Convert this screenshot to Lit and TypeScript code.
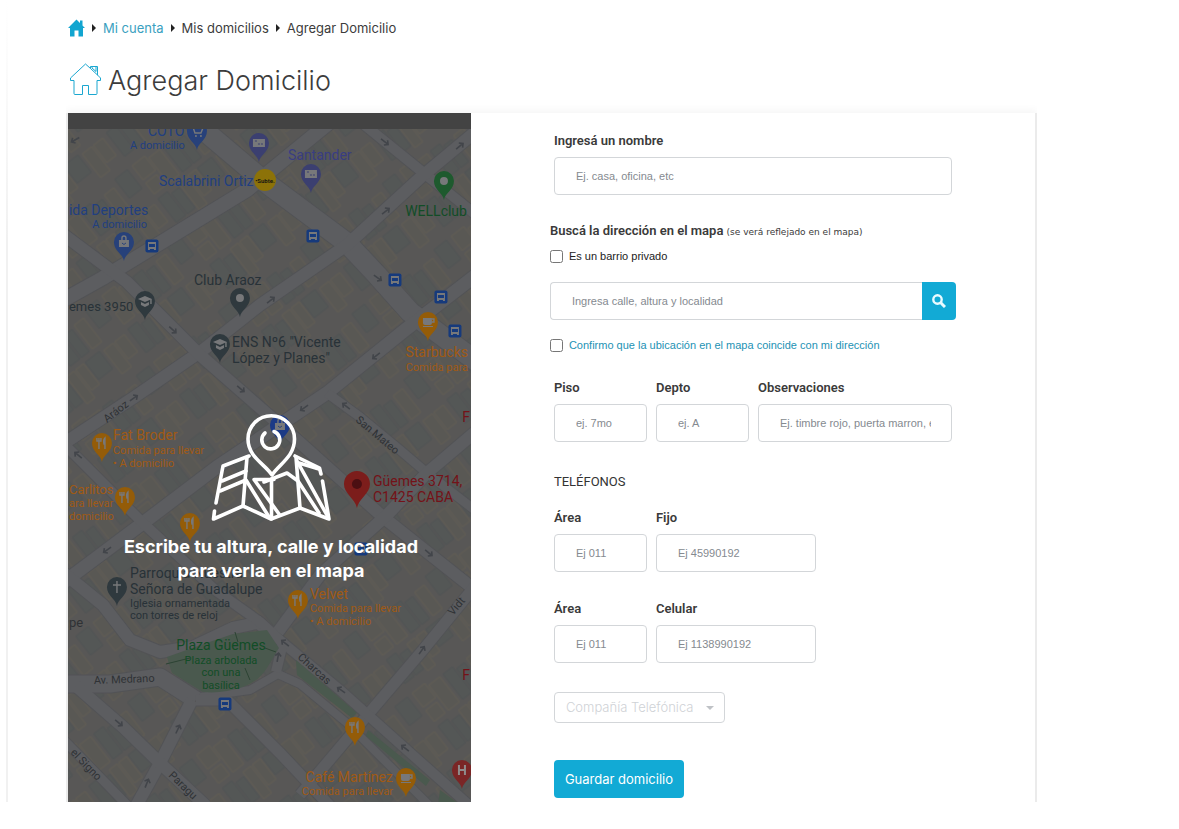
import { LitElement, html, svg, css } from "lit";
import { customElement, state } from "lit/decorators.js";

type Glyph = "cart" | "card" | "dot" | "bag" | "cap" | "cup" | "fork" | "cross" | "hospital";

interface Street { d: string; w: number }
interface Pin { x: number; y: number; fill: string; glyph: Glyph }
interface Label { x: number; y: number; text: string; fill: string; size: number; rotate?: number; anchor?: string }

const BLUE = "#213f80";
const VIOLET = "#393d82";
const SLATE = "#283238";
const ORANGE = "#a05a14";
const AMBER = "#945c08";
const GREEN = "#124d27";
const RED = "#741218";
const GREY = "#2f3235";

const STREETS: Street[] = [
  { d: "M60 302L103 278L247 190L330 122", w: 14 },
  { d: "M180 110L265 182L347 243L377 275L410 312L480 364", w: 20 },
  { d: "M356 118L420 170L480 218", w: 10 },
  { d: "M480 128L420 178L347 245L260 305L203 350L133 398L60 446", w: 12 },
  { d: "M60 232L127 282L200 355L297 440L383 517L480 594", w: 12 },
  { d: "M480 272L405 330L327 393L217 467L143 523L60 585", w: 13 },
  { d: "M327 393L360 417L400 450L427 473L480 514", w: 9 },
  { d: "M480 428L427 473L387 515L320 575L278 632", w: 12 },
  { d: "M480 580L423 650L365 718L300 795", w: 11 },
  { d: "M250 618L283 643L340 690L407 750L470 806", w: 10 },
  { d: "M200 697L250 690L278 674L300 684L347 723L430 806", w: 8 },
  { d: "M60 684L110 684L160 677L196 700", w: 17 },
  { d: "M192 700L160 763L134 810", w: 12 },
  { d: "M76 686L123 727L160 763L206 806", w: 12 },
  { d: "M60 736L128 806", w: 9 },
  { d: "M60 570L103 605L130 640L160 652L193 647L233 628L262 622", w: 12 },
  { d: "M196 700L227 700L280 753L330 806", w: 11 },
  { d: "M60 440L143 523L215 590L260 622L283 643L276 672", w: 10 },
];

const ARROWS: [number, number, number][] = [
  [75, 140, 150], [385, 142, 38], [460, 146, -40], [386, 211, -38], [378, 278, 35],
  [173, 330, 42], [271, 300, -38], [376, 356, 142], [241, 389, 40], [134, 398, -35],
  [304, 408, 145], [346, 406, 218], [78, 455, 220], [107, 550, 145], [429, 553, 40],
  [285, 643, 218], [278, 657, -80], [422, 650, -55], [341, 690, 215], [405, 748, 218],
  [119, 723, 40], [178, 729, -65], [147, 783, -68],
];

const PINS: Pin[] = [
  { x: 197, y: 131, fill: "#27417a", glyph: "cart" },
  { x: 259, y: 143, fill: "#3b3f70", glyph: "card" },
  { x: 311, y: 174, fill: "#3b3f70", glyph: "card" },
  { x: 444, y: 181, fill: "#1e5a2e", glyph: "dot" },
  { x: 124, y: 242, fill: "#27417a", glyph: "bag" },
  { x: 145, y: 301, fill: "#2f393e", glyph: "cap" },
  { x: 240, y: 298, fill: "#2f393e", glyph: "dot" },
  { x: 220, y: 344, fill: "#2f393e", glyph: "cap" },
  { x: 428, y: 322, fill: AMBER, glyph: "cup" },
  { x: 280, y: 425, fill: "#1c3a86", glyph: "bag" },
  { x: 102, y: 443, fill: AMBER, glyph: "fork" },
  { x: 125, y: 497, fill: AMBER, glyph: "fork" },
  { x: 190, y: 523, fill: AMBER, glyph: "fork" },
  { x: 117, y: 587, fill: "#2f393e", glyph: "cross" },
  { x: 298, y: 600, fill: AMBER, glyph: "fork" },
  { x: 355, y: 727, fill: AMBER, glyph: "fork" },
  { x: 406, y: 778, fill: AMBER, glyph: "cup" },
  { x: 462, y: 770, fill: "#7a2626", glyph: "hospital" },
];

const STOPS: [number, number][] = [
  [152, 246], [313, 236], [395, 280], [441, 297], [455, 331], [361, 549], [225, 704],
];

const LABELS: Label[] = [
  { x: 148, y: 136, text: "COTO", fill: BLUE, size: 14 },
  { x: 130, y: 149, text: "A domicilio", fill: BLUE, size: 11 },
  { x: 288, y: 160, text: "Santander", fill: VIOLET, size: 14 },
  { x: 159, y: 186, text: "Scalabrini Ortiz", fill: BLUE, size: 14 },
  { x: 69, y: 215, text: "ida Deportes", fill: BLUE, size: 14 },
  { x: 147, y: 228, text: "A domicilio", fill: BLUE, size: 11, anchor: "end" },
  { x: 467, y: 216, text: "WELLclub", fill: GREEN, size: 14, anchor: "end" },
  { x: 194, y: 285, text: "Club Araoz", fill: SLATE, size: 14 },
  { x: 69, y: 311, text: "emes 3950", fill: SLATE, size: 13 },
  { x: 232, y: 347, text: "ENS Nº6 \"Vicente", fill: SLATE, size: 14 },
  { x: 232, y: 363, text: "López y Planes\"", fill: SLATE, size: 14 },
  { x: 468, y: 357, text: "Starbucks", fill: ORANGE, size: 14, anchor: "end" },
  { x: 468, y: 371, text: "Comida para", fill: ORANGE, size: 11, anchor: "end" },
  { x: 107, y: 423, text: "Aráoz", fill: GREY, size: 11, rotate: -38 },
  { x: 355, y: 421, text: "San Mateo", fill: GREY, size: 11, rotate: 40 },
  { x: 470, y: 422, text: "F", fill: RED, size: 14, anchor: "end" },
  { x: 113, y: 440, text: "Fat Broder", fill: ORANGE, size: 14 },
  { x: 113, y: 454, text: "Comida para llevar", fill: ORANGE, size: 11 },
  { x: 113, y: 467, text: "• A domicilio", fill: ORANGE, size: 11 },
  { x: 69, y: 494, text: "Carlitos", fill: ORANGE, size: 13 },
  { x: 69, y: 507, text: "ara llevar", fill: ORANGE, size: 11 },
  { x: 69, y: 520, text: "domicilio", fill: ORANGE, size: 11 },
  { x: 373, y: 486, text: "Güemes 3714,", fill: RED, size: 14 },
  { x: 373, y: 502, text: "C1425 CABA", fill: RED, size: 14 },
  { x: 130, y: 578, text: "Parroquia Nuestra", fill: SLATE, size: 14 },
  { x: 130, y: 594, text: "Señora de Guadalupe", fill: SLATE, size: 14 },
  { x: 130, y: 607, text: "Iglesia ornamentada", fill: SLATE, size: 11 },
  { x: 130, y: 619, text: "con torres de reloj", fill: SLATE, size: 11 },
  { x: 310, y: 599, text: "Velvet", fill: ORANGE, size: 14 },
  { x: 310, y: 612, text: "Comida para llevar", fill: ORANGE, size: 11 },
  { x: 310, y: 625, text: "• A domicilio", fill: ORANGE, size: 11 },
  { x: 69, y: 627, text: "pe", fill: GREY, size: 13 },
  { x: 453, y: 616, text: "Vidt", fill: GREY, size: 11, rotate: -50 },
  { x: 221, y: 650, text: "Plaza Güemes", fill: GREEN, size: 14, anchor: "middle" },
  { x: 221, y: 664, text: "Plaza arbolada", fill: GREEN, size: 11, anchor: "middle" },
  { x: 221, y: 676, text: "con una", fill: GREEN, size: 11, anchor: "middle" },
  { x: 221, y: 689, text: "basílica", fill: GREEN, size: 11, anchor: "middle" },
  { x: 297, y: 658, text: "Charcas", fill: GREY, size: 11, rotate: 42 },
  { x: 94, y: 684, text: "Av. Medrano", fill: GREY, size: 11, rotate: -2 },
  { x: 470, y: 680, text: "F", fill: RED, size: 14, anchor: "end" },
  { x: 70, y: 753, text: "el Signo", fill: GREY, size: 11, rotate: 46 },
  { x: 168, y: 776, text: "Paragu", fill: GREY, size: 11, rotate: 44 },
  { x: 393, y: 782, text: "Café Martínez", fill: ORANGE, size: 14, anchor: "end" },
  { x: 393, y: 795, text: "Comida para llevar", fill: ORANGE, size: 11, anchor: "end" },
];

function glyph(kind: Glyph) {
  switch (kind) {
    case "cart":
      return svg`<path class="line" d="M-6-4h2l2 6h6l2-5h-8"/><circle class="ink" cx="-1" cy="5" r="1"/><circle class="ink" cx="4" cy="5" r="1"/>`;
    case "card":
      return svg`<rect class="ink" x="-6" y="-4" width="12" height="8"/><path d="M-4-2h2M-1 1h2M2 1h2" stroke="#3b3f70"/>`;
    case "dot":
      return svg`<circle class="ink" r="4"/>`;
    case "bag":
      return svg`<path class="ink" d="M-5-2H5V5H-5z"/><path class="line" d="M-2-2v-2a2 2 0 0 1 4 0v2"/><path d="M-2 1q2 3 4 0" fill="none" stroke="#27417a"/>`;
    case "cap":
      return svg`<path class="ink" d="M0-5L7-2L0 1L-7-2zM-4 1L0 3L4 1V4L0 6L-4 4z"/><path class="line" d="M6-2v5"/>`;
    case "cup":
      return svg`<path class="ink" d="M-5-4H4V1a2 2 0 0 1-2 2h-5a2 2 0 0 1-2-2zM-5 4H5v1H-5z"/><path class="line" d="M4-3h2v3h-2"/>`;
    case "fork":
      return svg`<path class="line" d="M-3-5v11M-5-5v3h4v-3M3 6v-11q-2 2-1 6h1"/>`;
    case "cross":
      return svg`<path class="line" d="M0-6V6M-4-2H4"/>`;
    default:
      return svg`<path d="M-3-5V5M3-5V5M-3 0H3" fill="none" stroke="#8f8b8b" stroke-width="2"/>`;
  }
}

@customElement("street-map")
export class StreetMap extends LitElement {
  static styles = css`
    :host { display: block; overflow: hidden; background: #434343; }
    .canvas { display: block; width: 100%; height: 100%; }
    .label { font-family: Roboto, "Liberation Sans", sans-serif; }
    .casing { fill: none; stroke: #525356; stroke-linejoin: round; }
    .road { fill: none; stroke: #5c5d60; stroke-linejoin: round; }
    .park { fill: #4a594e; }
    .ink { fill: #77787a; }
    .line { fill: none; stroke: #77787a; stroke-width: 1.4; }
    .arrow { fill: none; stroke: #42454a; stroke-width: 1.6; }
  `;

  render() {
    return html`
      <svg class="canvas" viewBox="68 113 403 689" preserveAspectRatio="xMidYMin slice" role="img" aria-label="Mapa">
        <defs>
          <pattern id="lots" width="104" height="84" patternUnits="userSpaceOnUse" patternTransform="rotate(-38)">
            <rect width="104" height="84" fill="#585756"/>
            <g stroke-width="1">
              <g fill="#545756" stroke="#4f5354">
                <path d="M2 2h12v30h-12zM16 6h10v26h-10zM52 2h18v22h-18zM38 48h12v32h-12zM52 52h10v28h-10zM84 44h16v24h-16z"/>
              </g>
              <g fill="#595854" stroke="#605c53">
                <path d="M28 2h10v34h-10zM40 2h10v26h-10zM74 4h12v30h-12zM88 4h12v22h-12zM2 44h16v18h-16zM20 48h14v32h-14zM66 50h12v30h-12zM2 66h14v14h-14z"/>
              </g>
            </g>
          </pattern>
          <clipPath id="sheet"><rect x="-400" y="129" width="1400" height="900"/></clipPath>
        </defs>
        <g clip-path="url(#sheet)">
          <rect x="-400" y="129" width="1400" height="900" fill="url(#lots)"/>
          ${STREETS.map((s) => svg`<path class="casing" d=${s.d} stroke-width=${s.w + 2}/>`)}
          ${STREETS.map((s) => svg`<path class="road" d=${s.d} stroke-width=${s.w}/>`)}
          <path class="park" d="M167 657Q200 645 233 634L267 630L279 648L267 668Q258 682 243 687Q222 694 203 692L172 673Z"/>
          <path class="park" d="M296 660L357 713L352 718L297 675ZM368 730L430 780L426 786L366 736ZM440 790L462 806H438Z"/>
          <path d="M166 664L190 658M235 632L238 642M245 668L250 680M265 648L276 652" stroke="#2c4333" fill="none"/>
          ${ARROWS.map(
            ([x, y, a]) => svg`<path class="arrow" transform="translate(${x} ${y}) rotate(${a})" d="M-5 0H4M1-3L4 0L1 3"/>`,
          )}
          ${LABELS.map(
            (l) => svg`<text class="label" transform="translate(${l.x} ${l.y}) rotate(${l.rotate ?? 0})"
              font-size=${l.size} fill=${l.fill} text-anchor=${l.anchor ?? "start"}>${l.text}</text>`,
          )}
          ${PINS.map(
            (p) => svg`<g transform="translate(${p.x} ${p.y})">
              <path d="M0 19C-1 12-10 9-10 0a10 10 0 1 1 20 0C10 9 1 12 0 19z" fill=${p.fill}/>${glyph(p.glyph)}</g>`,
          )}
          ${STOPS.map(
            ([x, y]) => svg`<g transform="translate(${x} ${y})">
              <rect x="-6.5" y="-6.5" width="13" height="13" rx="2" fill="#163a7c"/>
              <path class="ink" d="M-4-4H4V4H2V3H-2V4H-4z"/><path d="M-3-2H3V1H-3z" fill="#163a7c"/></g>`,
          )}
          <circle cx="265" cy="180" r="11" fill="#8c7208"/>
          <text class="label" x="265" y="183" font-size="6" font-weight="700" text-anchor="middle" fill="#1b1a12">•Subte.</text>
          <path d="M357 508C355 498 344 494 344 484a13 13 0 1 1 26 0C370 494 359 498 357 508z" fill="#7c1d1b"/>
          <circle cx="357" cy="484" r="5" fill="#4b0f12"/>
        </g>
      </svg>
    `;
  }
}

@customElement("app-root")
export class AppRoot extends LitElement {
  static styles = css`
    :host {
      display: block;
      color: #3c3c3c;
      background: #fff;
      font-family: "Liberation Sans", Arial, sans-serif;
    }
    * { box-sizing: border-box; }
    .page {
      margin: 0 6px;
      padding: 18px 0 0 58px;
      border-left: 2px solid;
      border-image: linear-gradient(#fff, #f1f1f1 30%) 1;
    }
    .crumbs { font-family: Inter, "Open Sans", sans-serif; font-size: 13px; line-height: 20px; }
    .trail { display: flex; flex-wrap: wrap; align-items: center; gap: 7px; margin: 0; padding: 0 2px; list-style: none; }
    .crumb { display: flex; align-items: center; gap: 7px; }
    .crumb + .crumb::before {
      content: "";
      border: 4px solid transparent;
      border-left: 4px solid #222;
      border-right: 0;
    }
    .crumbs a { color: inherit; text-decoration: none; display: flex; }
    .crumbs a.link { color: #3a9fc0; }
    .title { display: flex; align-items: flex-start; gap: 7px; margin: 25px 0 14px; padding: 0 4px; }
    h1 { margin: 0; font: 300 27px/36px Inter, "Open Sans", sans-serif; }
    .card {
      display: grid;
      grid-template-columns: 5fr 7fr;
      max-width: 971px;
      border: 2px solid #ebebeb;
      border-width: 0 2px;
      box-shadow: 0 -3px 8px #0000000a;
      clip-path: inset(-14px 0 0 0);
    }
    .locator { position: relative; min-width: 0; }
    .map { position: absolute; inset: 0; }
    .hint {
      position: absolute;
      inset: 0;
      display: flex;
      flex-direction: column;
      align-items: center;
      justify-content: center;
      gap: 14px;
      padding: 80px 0 0 3px;
    }
    .hint p {
      margin: 0;
      color: #fff;
      text-align: center;
      font: 700 18px/24px Inter, "Open Sans", sans-serif;
    }
    .form { padding: 20px 79px 4px; min-width: 0; background: #fff; }
    .inset { padding: 0 4px; }
    .row { display: grid; gap: 9px; padding: 0 4px; }
    .unit { grid-template-columns: 93fr 93fr 194fr; margin-top: 27px; }
    .phone { grid-template-columns: 93fr 160fr 127fr; }
    .mobile { margin-top: 29px; }
    .field { display: flex; flex-direction: column; gap: 8px; min-width: 0; }
    .caption { display: block; font: 600 13px/16px Roboto, "Liberation Sans", sans-serif; color: #3a3a3a; }
    .note { font: 400 9px/12px "DejaVu Sans", Verdana, sans-serif; }
    .box {
      width: 100%;
      height: 38px;
      padding: 0 20px 0 21px;
      border: 1px solid #d3d6d9;
      border-radius: 4px;
      background: #fff;
      color: #495057;
      font: 11px/16px "Liberation Sans", Arial, sans-serif;
    }
    .box::placeholder { color: #858a90; opacity: 1; }
    .address { margin-top: 28px; }
    .check { display: flex; align-items: center; gap: 6px; font-size: 11px; line-height: 16px; color: #222; }
    .check input { width: 13px; height: 13px; margin: 0; }
    .private { margin-top: 9px; }
    .confirm { margin-top: 17px; }
    .confirm label { color: #2392b4; }
    .search { display: flex; margin-top: 18px; }
    .search .box { flex: 1; min-width: 0; border-right: 0; border-radius: 4px 0 0 4px; }
    .go {
      display: grid;
      place-items: center;
      width: 34px;
      padding: 0;
      border: 0;
      border-radius: 0 4px 4px 0;
      background: #12aad5;
    }
    h2 { margin: 32px 0 20px; padding: 0 4px; font: 400 13px/16px Roboto, "Liberation Sans", sans-serif; color: #333; }
    .company { position: relative; display: flex; align-items: center; width: fit-content; margin: 29px 0 0 4px; }
    .company select {
      appearance: none;
      height: 31px;
      padding: 0 30px 2px 11px;
      border: 1px solid #d3d6d9;
      border-radius: 4px;
      background: #fff;
      color: #cfd2d6;
      font: 300 13px/20px Inter, "Open Sans", sans-serif;
    }
    .caret {
      position: absolute;
      right: 11px;
      border: 4px solid transparent;
      border-top-color: #bfc2c6;
      border-bottom: 0;
      pointer-events: none;
    }
    .save {
      display: block;
      margin: 37px 0 0 4px;
      padding: 9px 11px;
      border: 0;
      border-radius: 4px;
      background: #12aad5;
      color: #fff;
      font: 400 13px/20px Inter, "Open Sans", sans-serif;
    }
    @media (max-width: 800px) {
      .page { padding-left: 16px; }
      .card { grid-template-columns: 1fr; }
      .locator { min-height: 420px; }
      .form { padding: 20px 16px; }
    }
  `;

  @state() private privateArea = false;
  @state() private confirmed = false;

  private field(id: string, caption: string, placeholder: string) {
    return html`<div class="field">
      <label class="caption" for=${id}>${caption}</label>
      <input class="box" id=${id} type="text" placeholder=${placeholder} />
    </div>`;
  }

  render() {
    return html`
      <main class="page">
        <nav class="crumbs" aria-label="Ruta">
          <ol class="trail">
            <li class="crumb">
              <a href="#" aria-label="Inicio">
                <svg width="17" height="18" viewBox="0 0 17 18" fill="#12a5d0">
                  <path d="M8.500 0.500L0 9h2v8.500h4.500v-6h4v6h4.500V9h2l-2.500-2.500V1.500h-2.500v2.500z" />
                </svg>
              </a>
            </li>
            <li class="crumb"><a class="link" href="#">Mi cuenta</a></li>
            <li class="crumb"><a href="#">Mis domicilios</a></li>
            <li class="crumb">Agregar Domicilio</li>
          </ol>
        </nav>
        <header class="title">
          <svg width="31" height="33" viewBox="0 0 31 33" fill="none" stroke="#1aa7d0" stroke-linejoin="round">
            <path d="M15.500 1L0.500 15v2.500h3.500V30.500q0 1 1 1h7.500V22.500h6V31.500h7.500q1 0 1-1V17.500h3.500V15L27.500 12V3.500H20.500V5.500z" />
            <path d="M20.500 5.500L27.500 12M22 3.500V5L26 8.500V3.500" />
          </svg>
          <h1>Agregar Domicilio</h1>
        </header>
        <section class="card">
          <div class="locator">
            <street-map class="map"></street-map>
            <div class="hint">
              <svg width="120" height="108" viewBox="210 412 120 108" fill="none" stroke="#fff" stroke-width="3.600" stroke-linecap="round" stroke-linejoin="round">
                <path d="M271 474C264 463 247 456 247 438a23 23 0 0 1 46.500 0C293.500 456 278 463 271 474z" />
                <path d="M273 430.500A9 9 0 1 1 264 432" />
                <path d="M248 455L222 465L215 502M213.500 510L212.500 518L242 505L270 518L299 507L328 518L321.500 480M320 473L318.500 467L294 455" />
                <path d="M246 456L242 505M270.500 478V518M295 456L299 507" />
                <path d="M221 480L245 470M219 490L245 479L268 516M273 478.500H253L278 513M263 481L286 472L297 480L318 512M296 460L327 516M298 462L318 468" />
              </svg>
              <p>Escribe tu altura, calle y localidad<br />para verla en el mapa</p>
            </div>
          </div>
          <form class="form" @submit=${(e: Event) => e.preventDefault()}>
            <div class="inset">${this.field("name", "Ingresá un nombre", "Ej. casa, oficina, etc")}</div>
            <div class="address">
              <label class="caption" for="address">Buscá la dirección en el mapa <span class="note">(se verá reflejado en el mapa)</span></label>
            </div>
            <div class="check private">
              <input id="private" type="checkbox" .checked=${this.privateArea}
                @change=${(e: Event) => (this.privateArea = (e.target as HTMLInputElement).checked)} />
              <label for="private">Es un barrio privado</label>
            </div>
            <div class="search">
              <input class="box" id="address" type="text" placeholder="Ingresa calle, altura y localidad" />
              <button class="go" type="button" aria-label="Buscar">
                <svg width="14" height="14" viewBox="0 0 14 14" fill="none" stroke="#e9fbff" stroke-width="2.400">
                  <circle cx="5.500" cy="5.500" r="4.200" /><path d="M8.500 8.500L13 13" stroke-width="3" />
                </svg>
              </button>
            </div>
            <div class="check confirm">
              <input id="confirm" type="checkbox" .checked=${this.confirmed}
                @change=${(e: Event) => (this.confirmed = (e.target as HTMLInputElement).checked)} />
              <label for="confirm">Confirmo que la ubicación en el mapa coincide con mi dirección</label>
            </div>
            <div class="row unit">
              ${this.field("floor", "Piso", "ej. 7mo")}
              ${this.field("flat", "Depto", "ej. A")}
              ${this.field("notes", "Observaciones", "Ej. timbre rojo, puerta marron, etc")}
            </div>
            <h2>TELÉFONOS</h2>
            <div class="row phone">
              ${this.field("area-home", "Área", "Ej 011")}
              ${this.field("home", "Fijo", "Ej 45990192")}
            </div>
            <div class="row phone mobile">
              ${this.field("area-mobile", "Área", "Ej 011")}
              ${this.field("mobile", "Celular", "Ej 1138990192")}
            </div>
            <div class="company">
              <select aria-label="Compañía Telefónica"><option>Compañía Telefónica</option></select>
              <span class="caret"></span>
            </div>
            <button class="save" type="submit">Guardar domicilio</button>
          </form>
        </section>
      </main>
    `;
  }
}
